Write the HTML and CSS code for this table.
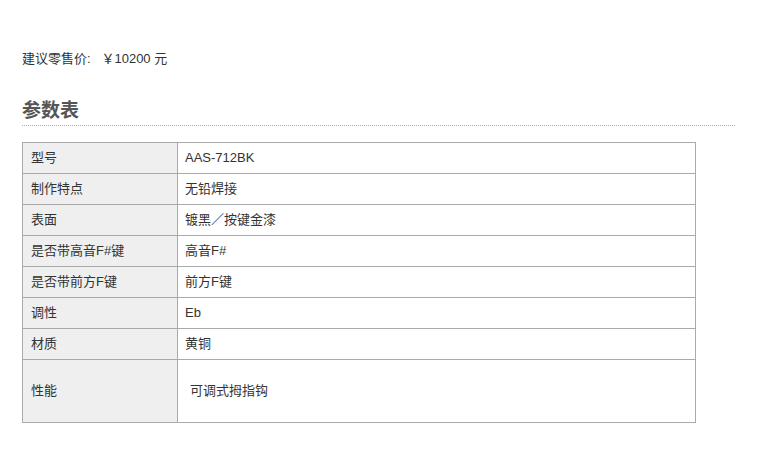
FILE: index.html
```html
<!DOCTYPE html>
<html lang="zh-CN">
<head>
<meta charset="utf-8">
<title>参数表</title>
<link rel="stylesheet" href="styles.css">
</head>
<body>
<div class="page">
  <p class="price">建议零售价:&nbsp;&nbsp; ￥10200 元</p>
  <h2 class="section-title">参数表</h2>
  <table class="spec">
    <tr><td class="k">型号</td><td class="v">AAS-712BK</td></tr>
    <tr><td class="k">制作特点</td><td class="v">无铅焊接</td></tr>
    <tr><td class="k">表面</td><td class="v">镀黑／按键金漆</td></tr>
    <tr><td class="k">是否带高音F#键</td><td class="v">高音F#</td></tr>
    <tr><td class="k">是否带前方F键</td><td class="v">前方F键</td></tr>
    <tr><td class="k">调性</td><td class="v">Eb</td></tr>
    <tr><td class="k">材质</td><td class="v">黄铜</td></tr>
    <tr class="tall"><td class="k">性能</td><td class="v"><span class="indent">可调式拇指钩</span></td></tr>
  </table>
</div>
</body>
</html>
```
FILE: styles.css
```css
html, body {
  margin: 0;
  padding: 0;
  background: #fff;
}
body {
  font-family: "Liberation Sans", "Noto Sans CJK SC", sans-serif;
  font-size: 13px;
  color: #333;
}
.page {
  padding: 50px 0 0 22px;
  width: 713px;
}
.price {
  margin: 0;
  line-height: 17px;
  color: #333;
}
.section-title {
  margin: 32px 0 0 0;
  font-size: 19px;
  line-height: 24px;
  font-weight: bold;
  color: #555;
  padding-bottom: 2px;
  border-bottom: 1px dotted #aaa;
}
.spec {
  margin-top: 16px;
  border-collapse: collapse;
  width: 674px;
}
.spec td {
  border: 1px solid #aaa;
  height: 30px;
  padding: 0 7px;
  vertical-align: middle;
  line-height: 16px;
}
.spec td.k {
  width: 139px;
  background: #efefef;
  padding-left: 8px;
}
.spec tr.tall td {
  height: 62px;
}
.indent {
  padding-left: 5px;
}
```
